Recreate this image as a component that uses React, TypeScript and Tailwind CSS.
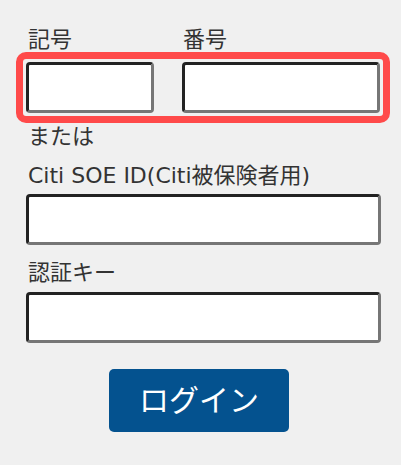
const FONT = { fontFamily: '"DejaVu Sans", "Noto Sans CJK JP", sans-serif' };

function Field({ className }: { className: string }) {
  return (
    <input
      type="text"
      className={`h-[51px] bg-white border-[3px] border-t-[#222222] border-l-[#222222] border-r-[#767676] border-b-[#767676] rounded-[4px] outline-none ${className}`}
    />
  );
}

export default function App() {
  return (
    <div
      className="w-full h-[465px] bg-[#f0f0f0] text-[#333333] text-[22px] leading-[24px] pt-[28px]"
      style={FONT}
    >
      {/* 記号 / 番号 */}
      <div className="flex">
        <span className="ml-[28px] w-[155px]">記号</span>
        <span>番号</span>
      </div>
      <div className="ml-[16px] w-[374px] border-[7px] border-[#ff4a4a] rounded-[10px] p-[3px] flex gap-[28px]">
        <Field className="w-[128px]" />
        <Field className="w-[198px]" />
      </div>

      <p className="ml-[28px] mt-[2px]">または</p>

      <p className="ml-[28px] mt-[15px]">Citi SOE ID(Citi被保険者用)</p>
      <div className="ml-[26px] mt-[6px]">
        <Field className="w-[355px]" />
      </div>

      <p className="ml-[28px] mt-[16px]">認証キー</p>
      <div className="ml-[26px] mt-[7px]">
        <Field className="w-[355px]" />
      </div>

      <div className="flex justify-center mt-[26px] pr-[3px]">
        <button className="w-[180px] h-[63px] rounded-[5px] bg-[#04528f] text-white text-[30px]">
          ログイン
        </button>
      </div>
    </div>
  );
}
